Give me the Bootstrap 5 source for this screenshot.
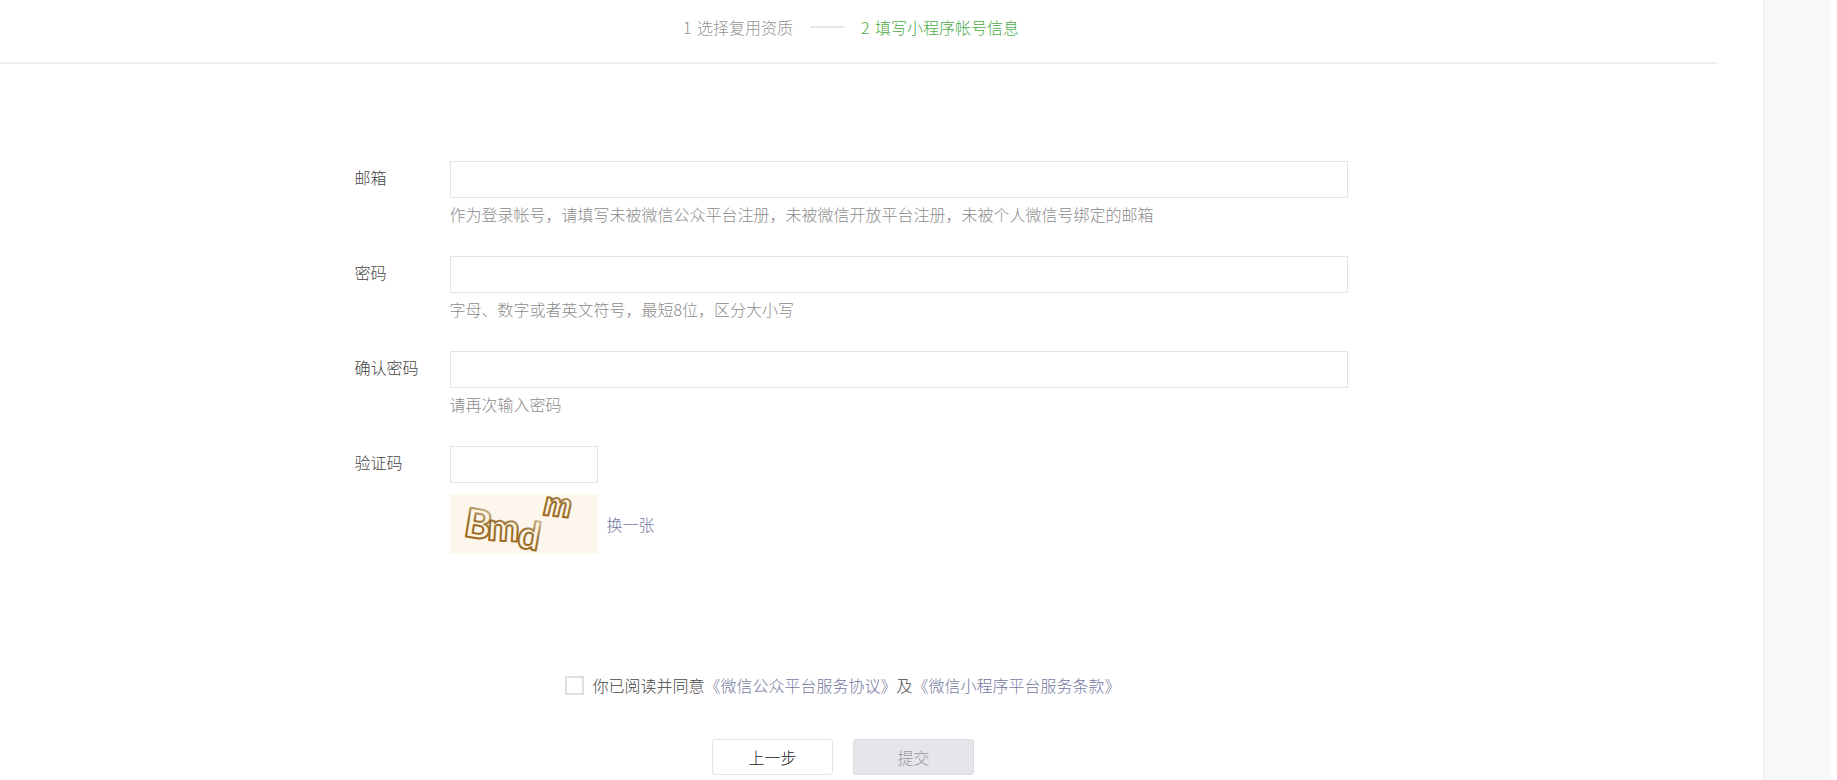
<!DOCTYPE html>
<html lang="zh-CN">
<head>
<meta charset="utf-8">
<meta name="viewport" content="width=device-width, initial-scale=1">
<title>填写小程序帐号信息</title>
<link href="https://cdn.jsdelivr.net/npm/bootstrap@5.3.0/dist/css/bootstrap.min.css" rel="stylesheet">
<style>
  body { font-family: "Noto Sans CJK SC", sans-serif; font-weight: 300; font-size: 16px; line-height: 24px; color: #444; background: #fff; }
  a { color: #7478a0; text-decoration: none; }
  .side-strip { width: 68px; margin-right: 6px; background: #f6f8fa; border-left: 1px solid #eeeff2; }
  .steps { height: 64px; margin-right: 46px; padding: 0 15px 9px 0; border-bottom: 2px solid #ebedf0; color: #959595; }
  .steps ol { gap: 17px; }
  .steps .current { color: #4caa49; }
  .step-no { margin-right: 2px; }
  .step-rule { width: 34px; height: 2px; background: #e4e5e8; }
  .account-form { padding: 97px 61px 0 0; }
  .fields { max-width: 993px; }
  .field-row { margin-bottom: 22px; }
  .field-label { width: 95px; flex: none; padding-top: 4px; }
  .form-control { height: 37px; border: 1px solid #e4e4e6; border-radius: 0; }
  .hint { padding-top: 4px; min-height: 36px; color: #8c8c8c; }
  .code-box { width: 148px; }
  .captcha { margin-top: 11px; gap: 9px; }
  .captcha svg { overflow: visible; }
  .consent { padding: 97px 16px 0 0; }
  .consent label { padding-left: 8px; }
  .consent .form-check-input { width: 19px; height: 19px; border: 2px solid #e0e0e2; border-radius: 0; margin: 0; }
  .actions { gap: 20px; padding: 42px 16px 5px 0; }
  .actions .btn { width: 121px; height: 36px; padding: 0; border: 1px solid #e4e4e7; border-radius: 3px; font-weight: 300; color: #222; background: #fff; }
  .actions .btn:disabled { color: #97979c; background: #e5e5ea; border-color: #dcdce1; opacity: 1; }
</style>
</head>
<body>
<div class="d-flex min-vh-100">
  <main class="flex-grow-1">
    <header class="steps d-flex align-items-center justify-content-center">
      <ol class="list-unstyled d-flex align-items-center mb-0">
        <li><span class="step-no">1</span> 选择复用资质</li>
        <li class="step-rule" aria-hidden="true"></li>
        <li class="current" aria-current="step"><span class="step-no">2</span> 填写小程序帐号信息</li>
      </ol>
    </header>
    <form class="account-form">
      <div class="fields mx-auto">
        <div class="field-row d-flex">
          <label class="field-label" for="email">邮箱</label>
          <div class="flex-grow-1">
            <input class="form-control" type="email" id="email" aria-describedby="email-hint">
            <div class="hint" id="email-hint">作为登录帐号，请填写未被微信公众平台注册，未被微信开放平台注册，未被个人微信号绑定的邮箱</div>
          </div>
        </div>
        <div class="field-row d-flex">
          <label class="field-label" for="pwd">密码</label>
          <div class="flex-grow-1">
            <input class="form-control" type="password" id="pwd" aria-describedby="pwd-hint">
            <div class="hint" id="pwd-hint">字母、数字或者英文符号，最短8位，区分大小写</div>
          </div>
        </div>
        <div class="field-row d-flex">
          <label class="field-label" for="pwd2">确认密码</label>
          <div class="flex-grow-1">
            <input class="form-control" type="password" id="pwd2" aria-describedby="pwd2-hint">
            <div class="hint" id="pwd2-hint">请再次输入密码</div>
          </div>
        </div>
        <div class="field-row d-flex">
          <label class="field-label" for="code">验证码</label>
          <div class="flex-grow-1">
            <input class="form-control code-box" type="text" id="code">
            <div class="captcha d-flex align-items-center">
              <svg width="148" height="60" viewBox="0 0 148 60" role="img" aria-label="验证码图片">
                <defs>
                  <linearGradient id="ink" x1="0.4" y1="0" x2="0.2" y2="1">
                    <stop offset="0.1" stop-color="#c9b48c"/>
                    <stop offset="0.45" stop-color="#96702f"/>
                    <stop offset="1" stop-color="#a4681a"/>
                  </linearGradient>
                </defs>
                <rect width="148" height="60" fill="#fdf6ec"/>
                <g font-family="Lato, sans-serif" font-weight="900" stroke-linejoin="round" fill="#fdf3e2" stroke="url(#ink)" stroke-width="2">
                  <text font-size="40" transform="translate(13 42) rotate(9)">B</text>
                  <text font-size="38" transform="translate(37 46) rotate(3)">m</text>
                  <text font-size="39" transform="translate(66 53) rotate(10)">d</text>
                  <text font-size="35" font-style="italic" transform="translate(93 21) rotate(6)">m</text>
                </g>
              </svg>
              <a href="#">换一张</a>
            </div>
          </div>
        </div>
      </div>
      <div class="consent-area">
        <div class="consent d-flex justify-content-center align-items-center">
          <input class="form-check-input" type="checkbox" id="agree">
          <label for="agree">你已阅读并同意<a href="#">《微信公众平台服务协议》</a>及<a href="#">《微信小程序平台服务条款》</a></label>
        </div>
        <div class="actions d-flex justify-content-center">
          <button class="btn" type="button">上一步</button>
          <button class="btn" type="submit" disabled>提交</button>
        </div>
      </div>
    </form>
  </main>
  <aside class="side-strip flex-shrink-0"></aside>
</div>
<script src="https://cdn.jsdelivr.net/npm/bootstrap@5.3.0/dist/js/bootstrap.bundle.min.js"></script>
</body>
</html>
